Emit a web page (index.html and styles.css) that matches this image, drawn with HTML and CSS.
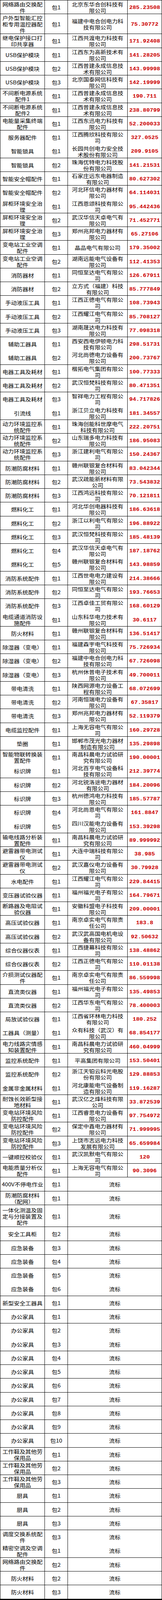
FILE: index.html
```html
<!DOCTYPE html>
<html lang="zh-CN">
<head>
<meta charset="utf-8">
<meta name="viewport" content="width=device-width, initial-scale=1">
<title>中标结果</title>
<link rel="stylesheet" href="styles.css">
</head>
<body>
<div class="sheet">
<div class="row"><div class="cell"><span class="t">网络路由交换配件</span></div><div class="cell"><span class="t">包1</span></div><div class="cell co"><span class="t">北京东华合创科技有限公司</span></div><div class="cell n"><span class="t">285.23508</span></div></div>
<div class="row h57"><div class="cell"><span class="t">户外型智能汇控柜专用温控器配件</span></div><div class="cell"><span class="t">包1</span></div><div class="cell co"><span class="t">福建中电合创电力科技有限公司</span></div><div class="cell n"><span class="t">75.30772</span></div></div>
<div class="row"><div class="cell"><span class="t">继电保护接口打印共享器</span></div><div class="cell"><span class="t">包1</span></div><div class="cell co"><span class="t">江西共渡电力科技有限公司</span></div><div class="cell n"><span class="t">171.92408</span></div></div>
<div class="row"><div class="cell"><span class="t">USB保护模块</span></div><div class="cell"><span class="t">包1</span></div><div class="cell co"><span class="t">江西东为高新技术有限公司</span></div><div class="cell n"><span class="t">141.28205</span></div></div>
<div class="row"><div class="cell"><span class="t">USB保护模块</span></div><div class="cell"><span class="t">包2</span></div><div class="cell co"><span class="t">江西普建永成信息技术有限公司</span></div><div class="cell n"><span class="t">143.99998</span></div></div>
<div class="row"><div class="cell"><span class="t">USB保护模块</span></div><div class="cell"><span class="t">包3</span></div><div class="cell co"><span class="t">北京国泰网信科技有限公司</span></div><div class="cell n"><span class="t">142.19999</span></div></div>
<div class="row"><div class="cell"><span class="t">不间断电源系统配件1</span></div><div class="cell"><span class="t">包1</span></div><div class="cell co"><span class="t">江西普建永成信息技术有限公司</span></div><div class="cell n"><span class="t">190.711</span></div></div>
<div class="row"><div class="cell"><span class="t">不间断电源系统配件2</span></div><div class="cell"><span class="t">包1</span></div><div class="cell co"><span class="t">江西普建永成信息技术有限公司</span></div><div class="cell n"><span class="t">238.80799</span></div></div>
<div class="row"><div class="cell"><span class="t">电能量采集终端配件</span></div><div class="cell"><span class="t">包1</span></div><div class="cell co"><span class="t">江西东迅电力科技有限公司</span></div><div class="cell n"><span class="t">52.200033</span></div></div>
<div class="row"><div class="cell"><span class="t">服务器配件</span></div><div class="cell"><span class="t">包1</span></div><div class="cell co"><span class="t">江西腾欣科技有限公司</span></div><div class="cell n"><span class="t">327.0525</span></div></div>
<div class="row"><div class="cell"><span class="t">智能锁具</span></div><div class="cell"><span class="t">包1</span></div><div class="cell co"><span class="t">长园共创电力安全技术股份有限公司</span></div><div class="cell n"><span class="t">209.9105</span></div></div>
<div class="row"><div class="cell"><span class="t">智能锁具</span></div><div class="cell"><span class="t">包2</span></div><div class="cell co"><span class="t">珠海优特电力科技股份有限公司</span></div><div class="cell n"><span class="t">141.21531</span></div></div>
<div class="row"><div class="cell"><span class="t">智能安全帽配件</span></div><div class="cell"><span class="t">包1</span></div><div class="cell co"><span class="t">石家庄远东电器制造有限公司</span></div><div class="cell n"><span class="t">80.627302</span></div></div>
<div class="row"><div class="cell"><span class="t">智能安全帽配件</span></div><div class="cell"><span class="t">包2</span></div><div class="cell co"><span class="t">河北环信电力器材有限公司</span></div><div class="cell n"><span class="t">64.114031</span></div></div>
<div class="row"><div class="cell"><span class="t">屏柜环境安全治理</span></div><div class="cell"><span class="t">包1</span></div><div class="cell co"><span class="t">江西恩颂科技有限公司</span></div><div class="cell n"><span class="t">95.442436</span></div></div>
<div class="row"><div class="cell"><span class="t">屏柜环境安全治理</span></div><div class="cell"><span class="t">包2</span></div><div class="cell co"><span class="t">武汉华信天卓电气有限公司</span></div><div class="cell n"><span class="t">71.452771</span></div></div>
<div class="row"><div class="cell"><span class="t">屏柜环境安全治理</span></div><div class="cell"><span class="t">包3</span></div><div class="cell co"><span class="t">郑州兆邦电力器材有限公司</span></div><div class="cell n"><span class="t">65.27106</span></div></div>
<div class="row"><div class="cell"><span class="t">变电站工业空调配件</span></div><div class="cell"><span class="t">包1</span></div><div class="cell co"><span class="t">晶品电气有限公司</span></div><div class="cell n"><span class="t">179.35002</span></div></div>
<div class="row"><div class="cell"><span class="t">变电站工业空调配件</span></div><div class="cell"><span class="t">包2</span></div><div class="cell co"><span class="t">湖南远能电气设备有限公司</span></div><div class="cell n"><span class="t">112.41353</span></div></div>
<div class="row"><div class="cell"><span class="t">消防器材</span></div><div class="cell"><span class="t">包1</span></div><div class="cell co"><span class="t">同恒至达电气有限公司</span></div><div class="cell n"><span class="t">126.67911</span></div></div>
<div class="row"><div class="cell"><span class="t">消防器材</span></div><div class="cell"><span class="t">包2</span></div><div class="cell co"><span class="t">立方式（福建）科技有限公司</span></div><div class="cell n"><span class="t">85.777849</span></div></div>
<div class="row"><div class="cell"><span class="t">手动液压工具</span></div><div class="cell"><span class="t">包1</span></div><div class="cell co"><span class="t">江西正德电气有限公司</span></div><div class="cell n"><span class="t">108.73943</span></div></div>
<div class="row"><div class="cell"><span class="t">手动液压工具</span></div><div class="cell"><span class="t">包2</span></div><div class="cell co"><span class="t">江西耀江电气有限公司</span></div><div class="cell n"><span class="t">85.708127</span></div></div>
<div class="row"><div class="cell"><span class="t">手动液压工具</span></div><div class="cell"><span class="t">包3</span></div><div class="cell co"><span class="t">湖南晟达电力科技有限公司</span></div><div class="cell n"><span class="t">77.098318</span></div></div>
<div class="row"><div class="cell"><span class="t">辅助工器具</span></div><div class="cell"><span class="t">包1</span></div><div class="cell co"><span class="t">西安西电伊顿电力科技有限公司</span></div><div class="cell n"><span class="t">298.51731</span></div></div>
<div class="row"><div class="cell"><span class="t">辅助工器具</span></div><div class="cell"><span class="t">包2</span></div><div class="cell co"><span class="t">河北尚德电力设备有限公司</span></div><div class="cell n"><span class="t">200.73767</span></div></div>
<div class="row"><div class="cell"><span class="t">电器工具及耗材</span></div><div class="cell"><span class="t">包1</span></div><div class="cell co"><span class="t">楷拓电气集团有限公司</span></div><div class="cell n"><span class="t">100.77333</span></div></div>
<div class="row"><div class="cell"><span class="t">电器工具及耗材</span></div><div class="cell"><span class="t">包2</span></div><div class="cell co"><span class="t">武汉恒梵科技有限公司</span></div><div class="cell n"><span class="t">80.471351</span></div></div>
<div class="row"><div class="cell"><span class="t">电器工具及耗材</span></div><div class="cell"><span class="t">包3</span></div><div class="cell co"><span class="t">智祥电力工程有限公司</span></div><div class="cell n"><span class="t">94.717826</span></div></div>
<div class="row"><div class="cell"><span class="t">引流线</span></div><div class="cell"><span class="t">包1</span></div><div class="cell co"><span class="t">浙江贝立电力科技有限公司</span></div><div class="cell n"><span class="t">181.34557</span></div></div>
<div class="row"><div class="cell"><span class="t">动力环境监控系统配件</span></div><div class="cell"><span class="t">包1</span></div><div class="cell co"><span class="t">珠海创能科世摩电气科技有限公司</span></div><div class="cell n"><span class="t">222.20751</span></div></div>
<div class="row"><div class="cell"><span class="t">动力环境监控系统配件</span></div><div class="cell"><span class="t">包2</span></div><div class="cell co"><span class="t">山东瑞多电力科技有限公司</span></div><div class="cell n"><span class="t">186.95083</span></div></div>
<div class="row"><div class="cell"><span class="t">动力环境监控系统配件</span></div><div class="cell"><span class="t">包3</span></div><div class="cell co"><span class="t">浙江建利电气有限公司</span></div><div class="cell n"><span class="t">150.24367</span></div></div>
<div class="row"><div class="cell"><span class="t">防潮防腐材料</span></div><div class="cell"><span class="t">包1</span></div><div class="cell co"><span class="t">赣州联银复合材料有限公司</span></div><div class="cell n"><span class="t">83.042344</span></div></div>
<div class="row"><div class="cell"><span class="t">防潮防腐材料</span></div><div class="cell"><span class="t">包2</span></div><div class="cell co"><span class="t">武汉疏能新材料有限公司</span></div><div class="cell n"><span class="t">73.543832</span></div></div>
<div class="row"><div class="cell"><span class="t">防潮防腐材料</span></div><div class="cell"><span class="t">包3</span></div><div class="cell co"><span class="t">江西鸿远科技有限公司</span></div><div class="cell n"><span class="t">70.121811</span></div></div>
<div class="row"><div class="cell"><span class="t">燃料化工</span></div><div class="cell"><span class="t">包1</span></div><div class="cell co"><span class="t">河北华创电器科技有限公司</span></div><div class="cell n"><span class="t">186.63618</span></div></div>
<div class="row"><div class="cell"><span class="t">燃料化工</span></div><div class="cell"><span class="t">包2</span></div><div class="cell co"><span class="t">浙江以利电气有限公司</span></div><div class="cell n"><span class="t">196.88922</span></div></div>
<div class="row"><div class="cell"><span class="t">燃料化工</span></div><div class="cell"><span class="t">包3</span></div><div class="cell co"><span class="t">武汉恒梵科技有限公司</span></div><div class="cell n"><span class="t">185.48139</span></div></div>
<div class="row"><div class="cell"><span class="t">燃料化工</span></div><div class="cell"><span class="t">包4</span></div><div class="cell co"><span class="t">武汉华信天卓电气有限公司</span></div><div class="cell n"><span class="t">187.18762</span></div></div>
<div class="row"><div class="cell"><span class="t">燃料化工</span></div><div class="cell"><span class="t">包5</span></div><div class="cell co"><span class="t">赣州联银复合材料有限公司</span></div><div class="cell n"><span class="t">143.98859</span></div></div>
<div class="row"><div class="cell"><span class="t">消防系统配件</span></div><div class="cell"><span class="t">包1</span></div><div class="cell co"><span class="t">江西世电电力建设有限公司</span></div><div class="cell n"><span class="t">214.38666</span></div></div>
<div class="row"><div class="cell"><span class="t">消防系统配件</span></div><div class="cell"><span class="t">包2</span></div><div class="cell co"><span class="t">同恒至达电气有限公司</span></div><div class="cell n"><span class="t">193.76653</span></div></div>
<div class="row"><div class="cell"><span class="t">消防系统配件</span></div><div class="cell"><span class="t">包3</span></div><div class="cell co"><span class="t">江西卓佳工贸有限公司</span></div><div class="cell n"><span class="t">168.60129</span></div></div>
<div class="row"><div class="cell"><span class="t">电缆通道消防设施配件</span></div><div class="cell"><span class="t">包1</span></div><div class="cell co"><span class="t">山东科华电力技术有限公司</span></div><div class="cell n"><span class="t">30.6117</span></div></div>
<div class="row"><div class="cell"><span class="t">防火材料</span></div><div class="cell"><span class="t">包1</span></div><div class="cell co"><span class="t">赣州联银复合材料有限公司</span></div><div class="cell n"><span class="t">136.51417</span></div></div>
<div class="row"><div class="cell"><span class="t">除湿器（变电）</span></div><div class="cell"><span class="t">包1</span></div><div class="cell co"><span class="t">福建森宇电气科技有限公司</span></div><div class="cell n"><span class="t">75.726934</span></div></div>
<div class="row"><div class="cell"><span class="t">除湿器（变电）</span></div><div class="cell"><span class="t">包2</span></div><div class="cell co"><span class="t">福建中电合创电力科技有限公司</span></div><div class="cell n"><span class="t">67.726098</span></div></div>
<div class="row"><div class="cell"><span class="t">除湿器（变电）</span></div><div class="cell"><span class="t">包3</span></div><div class="cell co"><span class="t">杭州休普电子技术有限公司</span></div><div class="cell n"><span class="t">49.700011</span></div></div>
<div class="row"><div class="cell"><span class="t">带电清洗</span></div><div class="cell"><span class="t">包1</span></div><div class="cell co"><span class="t">陕西网源电力设备工程有限公司</span></div><div class="cell n"><span class="t">68.072699</span></div></div>
<div class="row"><div class="cell"><span class="t">带电清洗</span></div><div class="cell"><span class="t">包2</span></div><div class="cell co"><span class="t">河南恒瑞电力设备有限公司</span></div><div class="cell n"><span class="t">67.35817</span></div></div>
<div class="row"><div class="cell"><span class="t">带电清洗</span></div><div class="cell"><span class="t">包3</span></div><div class="cell co"><span class="t">郑州兆邦电力器材有限公司</span></div><div class="cell n"><span class="t">52.119379</span></div></div>
<div class="row"><div class="cell"><span class="t">电缆监控配件</span></div><div class="cell"><span class="t">包1</span></div><div class="cell co"><span class="t">上海无容电气有限公司</span></div><div class="cell n"><span class="t">160.29728</span></div></div>
<div class="row"><div class="cell"><span class="t">垫圈</span></div><div class="cell"><span class="t">包1</span></div><div class="cell co"><span class="t">邯郸市茂光电力器材制造有限公司</span></div><div class="cell n"><span class="t">135.29898</span></div></div>
<div class="row"><div class="cell"><span class="t">智能物联转换装置配件</span></div><div class="cell"><span class="t">包1</span></div><div class="cell co"><span class="t">南昌科晨电力试验研究有限公司</span></div><div class="cell n"><span class="t">190.00001</span></div></div>
<div class="row"><div class="cell"><span class="t">标识牌</span></div><div class="cell"><span class="t">包1</span></div><div class="cell co"><span class="t">河北百亨电气设备科技有限公司</span></div><div class="cell n"><span class="t">212.39774</span></div></div>
<div class="row"><div class="cell"><span class="t">标识牌</span></div><div class="cell"><span class="t">包2</span></div><div class="cell co"><span class="t">河北锐洛途电力器材有限公司</span></div><div class="cell n"><span class="t">184.20096</span></div></div>
<div class="row"><div class="cell"><span class="t">标识牌</span></div><div class="cell"><span class="t">包3</span></div><div class="cell co"><span class="t">杭州德鸿电力科技有限公司</span></div><div class="cell n"><span class="t">185.57787</span></div></div>
<div class="row"><div class="cell"><span class="t">标识牌</span></div><div class="cell"><span class="t">包4</span></div><div class="cell co"><span class="t">河北尚恩电气有限公司</span></div><div class="cell n"><span class="t">161.8847</span></div></div>
<div class="row"><div class="cell"><span class="t">标识牌</span></div><div class="cell"><span class="t">包5</span></div><div class="cell co"><span class="t">四川汉能电力设备有限公司</span></div><div class="cell n"><span class="t">153.39298</span></div></div>
<div class="row"><div class="cell"><span class="t">输电线路分析装置配件</span></div><div class="cell"><span class="t">包1</span></div><div class="cell co"><span class="t">南昌科晨电力试验研究有限公司</span></div><div class="cell n"><span class="t">89.999992</span></div></div>
<div class="row"><div class="cell"><span class="t">避雷器带电测试仪</span></div><div class="cell"><span class="t">包1</span></div><div class="cell co"><span class="t">大连中瑞科技有限公司</span></div><div class="cell n"><span class="t">38.985</span></div></div>
<div class="row"><div class="cell"><span class="t">避雷器带电测试仪</span></div><div class="cell"><span class="t">包2</span></div><div class="cell co"><span class="t">武汉嘉仪电力设备有限公司</span></div><div class="cell n"><span class="t">30.79928</span></div></div>
<div class="row"><div class="cell"><span class="t">水电配件</span></div><div class="cell"><span class="t">包1</span></div><div class="cell co"><span class="t">江西耀江电气有限公司</span></div><div class="cell n"><span class="t">229.84415</span></div></div>
<div class="row"><div class="cell"><span class="t">变压器试验仪器</span></div><div class="cell"><span class="t">包1</span></div><div class="cell co"><span class="t">福州福光电子有限公司</span></div><div class="cell n"><span class="t">164.79671</span></div></div>
<div class="row"><div class="cell"><span class="t">断路器及电阻试验仪器</span></div><div class="cell"><span class="t">包1</span></div><div class="cell co"><span class="t">安徽科盟电子科技有限公司</span></div><div class="cell n"><span class="t">209.00001</span></div></div>
<div class="row"><div class="cell"><span class="t">高压试验仪器</span></div><div class="cell"><span class="t">包1</span></div><div class="cell co"><span class="t">南京卓实电气有限责任公司</span></div><div class="cell n"><span class="t">183.8</span></div></div>
<div class="row"><div class="cell"><span class="t">高压试验仪器</span></div><div class="cell"><span class="t">包2</span></div><div class="cell co"><span class="t">武汉武高国电机电设备有限公司</span></div><div class="cell n"><span class="t">92.50632</span></div></div>
<div class="row"><div class="cell"><span class="t">综合仪器仪表</span></div><div class="cell"><span class="t">包1</span></div><div class="cell co"><span class="t">江西捷幕科技有限公司</span></div><div class="cell n"><span class="t">138.48862</span></div></div>
<div class="row"><div class="cell"><span class="t">综合仪器仪表</span></div><div class="cell"><span class="t">包2</span></div><div class="cell co"><span class="t">江西正德电气有限公司</span></div><div class="cell n"><span class="t">110.01138</span></div></div>
<div class="row"><div class="cell"><span class="t">介损测试仪器配件</span></div><div class="cell"><span class="t">包1</span></div><div class="cell co"><span class="t">南京卓实电气有限责任公司</span></div><div class="cell n"><span class="t">86.559998</span></div></div>
<div class="row"><div class="cell"><span class="t">直流类仪器</span></div><div class="cell"><span class="t">包1</span></div><div class="cell co"><span class="t">福州福光电子有限公司</span></div><div class="cell n"><span class="t">135.49853</span></div></div>
<div class="row"><div class="cell"><span class="t">直流类仪器</span></div><div class="cell"><span class="t">包2</span></div><div class="cell co"><span class="t">江西华东电气有限公司</span></div><div class="cell n"><span class="t">78.400003</span></div></div>
<div class="row"><div class="cell"><span class="t">局放试验仪器</span></div><div class="cell"><span class="t">包1</span></div><div class="cell co"><span class="t">江西省环林电力科技有限公司</span></div><div class="cell n"><span class="t">180.252</span></div></div>
<div class="row"><div class="cell"><span class="t">工器具（测量）</span></div><div class="cell"><span class="t">包1</span></div><div class="cell co"><span class="t">众有科技（武汉）有限公司</span></div><div class="cell n"><span class="t">68.854177</span></div></div>
<div class="row"><div class="cell"><span class="t">电力线路灾情感知装置配件</span></div><div class="cell"><span class="t">包1</span></div><div class="cell co"><span class="t">南昌科晨电力试验研究有限公司</span></div><div class="cell n"><span class="t">460.04999</span></div></div>
<div class="row"><div class="cell"><span class="t">监控系统配件</span></div><div class="cell"><span class="t">包1</span></div><div class="cell co"><span class="t">平高集团有限公司</span></div><div class="cell n"><span class="t">153.50401</span></div></div>
<div class="row"><div class="cell"><span class="t">监控系统配件</span></div><div class="cell"><span class="t">包2</span></div><div class="cell co"><span class="t">浙江天铂云科光电股份有限公司</span></div><div class="cell n"><span class="t">129.88853</span></div></div>
<div class="row"><div class="cell"><span class="t">金属非金属材料</span></div><div class="cell"><span class="t">包1</span></div><div class="cell co"><span class="t">河北康能电气设备制造有限公司</span></div><div class="cell n"><span class="t">119.16287</span></div></div>
<div class="row"><div class="cell"><span class="t">耐蚀长效新型接地材料</span></div><div class="cell"><span class="t">包1</span></div><div class="cell co"><span class="t">武汉亿之烽科技有限公司</span></div><div class="cell n"><span class="t">33.872539</span></div></div>
<div class="row"><div class="cell"><span class="t">变电站环境风险防控配件</span></div><div class="cell"><span class="t">包1</span></div><div class="cell co"><span class="t">江西睿思电力设备有限公司</span></div><div class="cell n"><span class="t">97.754972</span></div></div>
<div class="row"><div class="cell"><span class="t">变电站环境风险防控配件</span></div><div class="cell"><span class="t">包2</span></div><div class="cell co"><span class="t">保定中鑫电力器材有限公司</span></div><div class="cell n"><span class="t">71.999995</span></div></div>
<div class="row"><div class="cell"><span class="t">变电站环境风险防控配件</span></div><div class="cell"><span class="t">包3</span></div><div class="cell co"><span class="t">上饶市志远电力科技发展有限公司</span></div><div class="cell n"><span class="t">65.659984</span></div></div>
<div class="row"><div class="cell"><span class="t">一键顺控校验仪</span></div><div class="cell"><span class="t">包1</span></div><div class="cell co"><span class="t">武汉凯默电气有限公司</span></div><div class="cell n"><span class="t">120</span></div></div>
<div class="row"><div class="cell"><span class="t">电能质量分析仪配件</span></div><div class="cell"><span class="t">包1</span></div><div class="cell co"><span class="t">上海无容电气有限公司</span></div><div class="cell n"><span class="t">90.3096</span></div></div>
<div class="row"><div class="cell"><span class="t">400V不停电作业</span></div><div class="cell"><span class="t">包1</span></div><div class="cell span"><span class="t">流标</span></div></div>
<div class="row"><div class="cell"><span class="t">防潮防腐材料（配网）</span></div><div class="cell"><span class="t">包1</span></div><div class="cell span"><span class="t">流标</span></div></div>
<div class="row h63"><div class="cell"><span class="t">一体化测温及固定与分接装置及配件</span></div><div class="cell"><span class="t">包1</span></div><div class="cell span"><span class="t">流标</span></div></div>
<div class="row"><div class="cell"><span class="t">安全工具柜</span></div><div class="cell"><span class="t">包2</span></div><div class="cell span"><span class="t">流标</span></div></div>
<div class="row"><div class="cell"><span class="t">应急装备</span></div><div class="cell"><span class="t">包3</span></div><div class="cell span"><span class="t">流标</span></div></div>
<div class="row"><div class="cell"><span class="t">应急装备</span></div><div class="cell"><span class="t">包4</span></div><div class="cell span"><span class="t">流标</span></div></div>
<div class="row"><div class="cell"><span class="t">应急装备</span></div><div class="cell"><span class="t">包5</span></div><div class="cell span"><span class="t">流标</span></div></div>
<div class="row"><div class="cell"><span class="t">应急装备</span></div><div class="cell"><span class="t">包6</span></div><div class="cell span"><span class="t">流标</span></div></div>
<div class="row"><div class="cell"><span class="t">新型安全工器具</span></div><div class="cell"><span class="t">包1</span></div><div class="cell span"><span class="t">流标</span></div></div>
<div class="row"><div class="cell"><span class="t">办公家具</span></div><div class="cell"><span class="t">包1</span></div><div class="cell span"><span class="t">流标</span></div></div>
<div class="row"><div class="cell"><span class="t">办公家具</span></div><div class="cell"><span class="t">包2</span></div><div class="cell span"><span class="t">流标</span></div></div>
<div class="row"><div class="cell"><span class="t">办公家具</span></div><div class="cell"><span class="t">包3</span></div><div class="cell span"><span class="t">流标</span></div></div>
<div class="row"><div class="cell"><span class="t">办公家具</span></div><div class="cell"><span class="t">包4</span></div><div class="cell span"><span class="t">流标</span></div></div>
<div class="row"><div class="cell"><span class="t">办公家具</span></div><div class="cell"><span class="t">包5</span></div><div class="cell span"><span class="t">流标</span></div></div>
<div class="row"><div class="cell"><span class="t">办公家具</span></div><div class="cell"><span class="t">包6</span></div><div class="cell span"><span class="t">流标</span></div></div>
<div class="row"><div class="cell"><span class="t">办公家具</span></div><div class="cell"><span class="t">包7</span></div><div class="cell span"><span class="t">流标</span></div></div>
<div class="row"><div class="cell"><span class="t">办公家具</span></div><div class="cell"><span class="t">包8</span></div><div class="cell span"><span class="t">流标</span></div></div>
<div class="row"><div class="cell"><span class="t">办公家具</span></div><div class="cell"><span class="t">包9</span></div><div class="cell span"><span class="t">流标</span></div></div>
<div class="row"><div class="cell"><span class="t">办公家具</span></div><div class="cell"><span class="t">包10</span></div><div class="cell span"><span class="t">流标</span></div></div>
<div class="row"><div class="cell"><span class="t">工作鞋及其他劳保用品</span></div><div class="cell"><span class="t">包1</span></div><div class="cell span"><span class="t">流标</span></div></div>
<div class="row"><div class="cell"><span class="t">工作鞋及其他劳保用品</span></div><div class="cell"><span class="t">包2</span></div><div class="cell span"><span class="t">流标</span></div></div>
<div class="row"><div class="cell"><span class="t">工作鞋及其他劳保用品</span></div><div class="cell"><span class="t">包3</span></div><div class="cell span"><span class="t">流标</span></div></div>
<div class="row"><div class="cell"><span class="t">厨具</span></div><div class="cell"><span class="t">包1</span></div><div class="cell span"><span class="t">流标</span></div></div>
<div class="row"><div class="cell"><span class="t">厨具</span></div><div class="cell"><span class="t">包2</span></div><div class="cell span"><span class="t">流标</span></div></div>
<div class="row"><div class="cell"><span class="t">厨具</span></div><div class="cell"><span class="t">包3</span></div><div class="cell span"><span class="t">流标</span></div></div>
<div class="row"><div class="cell"><span class="t">调度交换系统配件</span></div><div class="cell"><span class="t">包3</span></div><div class="cell span"><span class="t">流标</span></div></div>
<div class="row"><div class="cell"><span class="t">精密空调及空调配件</span></div><div class="cell"><span class="t">包1</span></div><div class="cell span"><span class="t">流标</span></div></div>
<div class="row"><div class="cell"><span class="t">网络路由交换配件</span></div><div class="cell"><span class="t">包2</span></div><div class="cell span"><span class="t">流标</span></div></div>
<div class="row"><div class="cell"><span class="t">防火材料</span></div><div class="cell"><span class="t">包2</span></div><div class="cell span"><span class="t">流标</span></div></div>
<div class="row"><div class="cell"><span class="t">防火材料</span></div><div class="cell"><span class="t">包3</span></div><div class="cell span"><span class="t">流标</span></div></div>
</div>
</body>
</html>
```
FILE: styles.css
```css
:root {
  --u: calc(100vw / 415);
  --v: calc(100vh / 4643);
  --r: tan(atan2(calc(100vh * 415), calc(100vw * 4643)));
}

html, body {
  margin: 0;
  padding: 0;
  background: #ffffff;
}

html {
  overflow: hidden;
}

.sheet {
  box-sizing: border-box;
  width: calc(415 * var(--u));
  height: 100vh;
  display: flex;
  flex-direction: column;
  row-gap: var(--v);
  padding: var(--v) var(--u);
  background: #000000;
  font-family: "Noto Sans CJK SC", "Noto Sans", sans-serif;
  font-size: calc(14.67 * var(--u));
  line-height: calc(18 * var(--v));
  color: #000000;
}

.row {
  display: grid;
  grid-template-columns: calc(113 * var(--u)) calc(58 * var(--u)) calc(152 * var(--u)) calc(87 * var(--u));
  column-gap: var(--u);
  height: calc(39 * var(--v));
  flex: none;
}

.row.h57 { height: calc(57 * var(--v)); }
.row.h63 { height: calc(63 * var(--v)); }

.cell {
  background: #ffffff;
  display: flex;
  align-items: center;
  justify-content: center;
  text-align: center;
  padding: calc(2 * var(--v)) calc(2 * var(--u)) 0 calc(2 * var(--u));
  overflow-wrap: anywhere;
  min-width: 0;
  overflow: hidden;
}

.t {
  display: block;
  line-height: calc(18 * var(--u));
  transform-origin: 50% 50%;
  transform: scaleY(var(--r));
}

.cell.co {
  padding-left: calc(4 * var(--u));
  padding-right: calc(4 * var(--u));
}

.cell.span {
  grid-column: span 2;
}

.cell.n {
  font-family: "Liberation Mono", "DejaVu Sans Mono", monospace;
  font-weight: bold;
  color: #cc0000;
  padding-left: 0;
  padding-right: 0;
}
```
